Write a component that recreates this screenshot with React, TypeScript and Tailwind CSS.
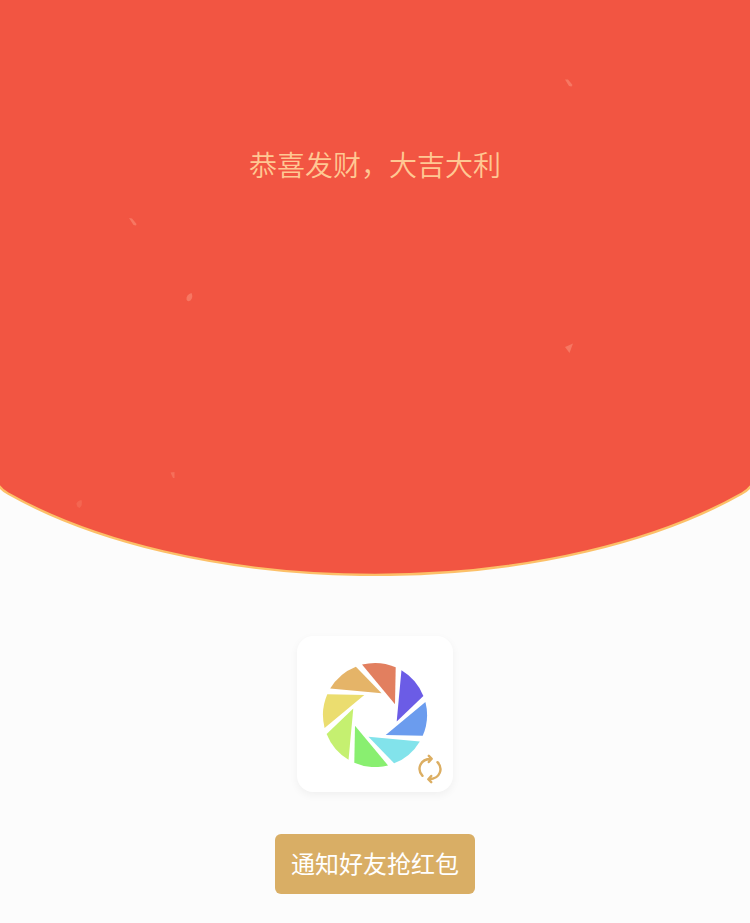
import React from "react";

const BLADES = ["#e27f5f", "#6b5ce6", "#6b9cee", "#82e3eb", "#89ef70", "#c5f070", "#ebdd6f", "#e5b468"];

function EnvelopeFlap() {
  return (
    <svg
      aria-hidden="true"
      viewBox="0 0 750 576"
      preserveAspectRatio="none"
      className="absolute inset-0 h-full w-full"
    >
      <path
        d="M-3 -4V483Q1 490 8 493.500A480 229 0 0 0 742 493.500Q749 490 753 483V-4Z"
        fill="#f25542"
        stroke="#fcc068"
        strokeWidth="2.400"
      />
      <g fill="#f8806a">
        <path d="M565 79.500L568 79.500L572.500 85L571.500 86.500L569 86Z" opacity=".8" />
        <path d="M129 218L132 218.500L136.500 224L136 225.500L133.500 225Z" opacity=".8" />
        <path d="M191.500 293Q193.500 297 190.500 300.500Q187.500 302.500 186.500 299.500Q186 294.500 191.500 293Z" opacity=".8" />
        <path d="M565 347L573 343.500L569.500 353Z" opacity=".8" />
        <path d="M170.500 472.500L174.500 472V478L173 478Z" opacity=".6" />
        <path d="M81.500 500Q83 505 79.500 508Q76.500 507 76.500 503.500Q77.500 500.500 81.500 500Z" opacity=".4" />
      </g>
    </svg>
  );
}

function ApertureLogo() {
  return (
    <svg aria-hidden="true" viewBox="-53 -54 106 106" className="size-[106px]">
      {BLADES.map((color, i) => (
        <path
          key={color}
          d="M-13 -50.400A52 52 0 0 1 20.700 -47.700L20 -10.700Z"
          fill={color}
          transform={`rotate(${i * 45})`}
        />
      ))}
    </svg>
  );
}

function RefreshIcon() {
  return (
    <svg
      aria-hidden="true"
      viewBox="-15 -15 30 30"
      className="size-[30px]"
      fill="none"
      stroke="#dcae62"
      strokeWidth="2.400"
      strokeLinecap="round"
      strokeLinejoin="round"
    >
      <path d="M-7.500 6.800C-13 1 -11 -9.500 1 -10.200M-1.200 -13.200L1.700 -10.200L-1.200 -7" />
      <path d="M7.500 -6.800C13 -1 11 9.500 -1 10.200M1.200 13.200L-1.700 10.200L1.200 7" />
    </svg>
  );
}

export default function App() {
  return (
    <main
      lang="zh-CN"
      className="flex min-h-screen flex-col items-center bg-[#fcfcfc] font-['Noto_Sans_CJK_SC',sans-serif]"
    >
      <header className="relative h-[576px] w-full pt-36 text-center">
        <EnvelopeFlap />
        <h1 className="relative text-[28px] leading-10 font-[350] text-[#ffc893]">恭喜发财，大吉大利</h1>
      </header>
      <section className="mt-15 flex flex-col items-center gap-[42px]">
        <div className="relative flex size-39 items-center justify-center rounded-2xl bg-white shadow-[0_3px_8px_rgba(0,0,0,0.05)]">
          <ApertureLogo />
          <button type="button" aria-label="更换封面" className="absolute right-2 bottom-2">
            <RefreshIcon />
          </button>
        </div>
        <button type="button" className="h-15 w-50 rounded-md bg-[#d9ae65] pb-0.5 text-2xl text-white">
          通知好友抢红包
        </button>
      </section>
    </main>
  );
}
